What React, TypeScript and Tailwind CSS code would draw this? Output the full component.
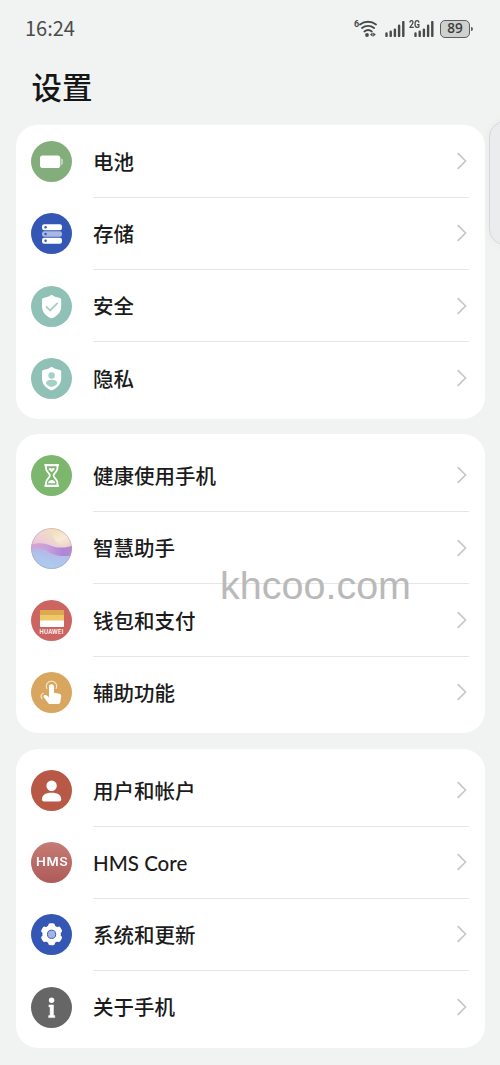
import type { ReactNode } from 'react';

type Item = { id: string; label: string; bg: string; icon: ReactNode };

const BatteryIcon = () => (
  <svg viewBox="0 0 41 41" className="size-full" aria-hidden="true">
    <rect x="9" y="14.6" width="20.3" height="12.4" rx="2.8" fill="#fff" />
    <path d="M30.2 17.8h.6a1 1 0 0 1 1 1v4a1 1 0 0 1-1 1h-.6z" fill="#fff" opacity=".6" />
  </svg>
);

const StorageIcon = () => (
  <svg viewBox="0 0 41 41" className="size-full" aria-hidden="true">
    <rect x="11" y="11.2" width="20" height="6" rx="2.2" fill="#fff" />
    <rect x="11" y="18.2" width="20" height="5.6" rx="2.2" fill="#a9b9e6" />
    <rect x="11" y="24.8" width="20" height="6" rx="2.2" fill="#fff" />
    <circle cx="14.6" cy="14.2" r="1.2" fill="#3456b5" />
    <circle cx="14.6" cy="21" r="1.2" fill="#3456b5" />
    <circle cx="14.6" cy="27.8" r="1.2" fill="#3456b5" />
  </svg>
);

const SHIELD = 'M19.4 9.400c.7-.4 1.700-.4 2.400 0 2.200 1.300 4.600 2.100 7 2.500.8.2 1.400.8 1.400 1.700v6.600c0 5.400-3.200 9.200-8.300 11.700-.8.4-1.800.4-2.600 0-5.100-2.500-8.300-6.300-8.300-11.700v-6.600c0-.9.6-1.500 1.400-1.700 2.400-.4 4.800-1.200 7-2.500z';

const SecurityIcon = () => (
  <svg viewBox="0 0 41 41" className="size-full" aria-hidden="true">
    <path d={SHIELD} fill="#fff" />
    <path d="M15 20.400l4.100 4 7.600-7.500" fill="none" stroke="#a9cfc6" strokeWidth="1.800" />
  </svg>
);

const PrivacyIcon = () => (
  <svg viewBox="0 0 41 41" className="size-full" aria-hidden="true">
    <path d={SHIELD} fill="#fff" />
    <circle cx="20.600" cy="17.500" r="3.200" fill="#a5d0c6" />
    <path d="M15 25.400c0-2.300 2-3.600 5.600-3.600s5.600 1.300 5.600 3.600c-1.200 1.700-3.200 3.200-5.600 3.500-2.400-.3-4.400-1.800-5.600-3.500z" fill="#a5d0c6" />
  </svg>
);

const HourglassIcon = () => (
  <svg viewBox="0 0 41 41" className="size-full" aria-hidden="true">
    <g fill="none" stroke="#fff" strokeWidth="1.800" strokeLinecap="round" strokeLinejoin="round">
      <path d="M14.300 10.200h12.800M14.300 30.800h12.800" strokeWidth="2.200" />
      <path d="M15 10.500v3c0 3 3.900 4.800 3.900 7s-3.900 4-3.900 7v3M26.400 10.500v3c0 3-3.900 4.800-3.900 7s3.900 4 3.900 7v3" />
    </g>
    <path d="M20.700 17.300l-2.700-2.500c-1.100-1.200.9-2.700 2.700-1.100 1.800-1.600 3.800-.1 2.700 1.100z" fill="#fff" />
    <path d="M17 28.300c.3-2 2-3.200 3.700-3.200s3.400 1.200 3.700 3.200z" fill="#fff" />
  </svg>
);

const AssistantIcon = () => (
  <svg viewBox="0 0 41 41" className="size-full" aria-hidden="true">
    <defs>
      <linearGradient id="sky" x1="0" y1="0.8" x2="0.5" y2="0">
        <stop offset="0" stopColor="#dfb0d2" />
        <stop offset="0.5" stopColor="#ebcbd8" />
        <stop offset="1" stopColor="#f2e0c4" />
      </linearGradient>
      <linearGradient id="sun" x1="0.2" y1="0" x2="0.7" y2="1">
        <stop offset="0" stopColor="#f0dcae" />
        <stop offset="0.6" stopColor="#f7ead6" />
        <stop offset="1" stopColor="#f0cfc8" />
      </linearGradient>
      <linearGradient id="wave" x1="0" y1="0" x2="1" y2="0">
        <stop offset="0" stopColor="#dca5cf" />
        <stop offset="0.4" stopColor="#c7a0dc" />
        <stop offset="0.75" stopColor="#ae86d6" />
        <stop offset="1" stopColor="#b08dd0" />
      </linearGradient>
      <linearGradient id="sea" x1="0.3" y1="1" x2="0.6" y2="0">
        <stop offset="0" stopColor="#a8d3ee" />
        <stop offset="0.6" stopColor="#b0c2ec" />
        <stop offset="1" stopColor="#bfabe3" />
      </linearGradient>
      <clipPath id="orb">
        <circle cx="20.5" cy="20.5" r="20.5" />
      </clipPath>
      <filter id="soft">
        <feGaussianBlur stdDeviation="0.7" />
      </filter>
    </defs>
    <g clipPath="url(#orb)">
      <path d="M0 0h41v41H0z" fill="url(#sky)" />
      <g filter="url(#soft)">
        <path d="M18 -2h26v20c-6 2-12 1-17-3S21 6 18 -2z" fill="url(#sun)" />
        <path d="M-2 17c8-2.500 15-2.500 21 .2s14 3.600 24 0V34H-2z" fill="url(#wave)" />
        <path d="M-2 21c9-2.500 14-1 19 2.500s15 6.500 27 3v18H-2z" fill="url(#sea)" />
      </g>
    </g>
    <circle cx="20.5" cy="20.500" r="20" fill="none" stroke="#a796a4" strokeOpacity=".5" strokeWidth=".8" />
  </svg>
);

const WalletIcon = () => (
  <div className="flex size-full flex-col items-center pt-[10.500px]">
    <svg viewBox="0 0 24 17" className="h-[17px] w-6 shrink-0" aria-hidden="true">
      <rect width="24" height="8" rx="1" fill="#dba94f" />
      <rect y="5" width="24" height="7" fill="#edc96c" />
      <rect y="10.500" width="24" height="6.500" rx=".8" fill="#fff" />
    </svg>
    <span className="mt-[2.500px] font-['Inter',sans-serif] text-[5.600px] leading-[5px] font-semibold tracking-[0.250px] text-white">HUAWEI</span>
  </div>
);

const TouchIcon = () => (
  <svg viewBox="0 0 41 41" className="size-full" aria-hidden="true">
    <path
      d="M18 14.800a2.500 2.500 0 0 1 5 0v6l5.200.9c1.500.3 2.200 1.300 2 2.700l-.9 5.700c-.2 1.300-1 2-2.200 2h-7.600c-1 0-1.800-.4-2.400-1.200l-4.300-5.700c-.6-.8-.3-1.700.6-2.100 1-.4 2-.1 2.700.6l1.900 1.600z"
      fill="#fff"
    />
    <path d="M15.800 16.500a5.200 5.200 0 1 1 9.400 0" fill="none" stroke="#f7e6ca" strokeWidth="1.200" strokeLinecap="round" />
    <path d="M12.300 21.200c-2.500 1-2.900 3.500-1.300 5.500" fill="none" stroke="#f7e6ca" strokeWidth="1.200" strokeLinecap="round" />
  </svg>
);

const UserIcon = () => (
  <svg viewBox="0 0 41 41" className="size-full" aria-hidden="true">
    <circle cx="20.600" cy="15.800" r="5.200" fill="#fff" />
    <path d="M11 29.300c0-4.200 3-6.600 9.600-6.600s9.600 2.400 9.600 6.600c0 1.500-.8 2.200-2.200 2.200H13.200c-1.400 0-2.200-.7-2.200-2.200z" fill="#fff" />
  </svg>
);

const HmsIcon = () => (
  <span className="scale-x-115 pl-px font-['Inter',sans-serif] text-[11.500px] leading-none font-semibold tracking-[0.500px] text-white">HMS</span>
);

const GearIcon = () => (
  <svg viewBox="0 0 41 41" className="size-full" aria-hidden="true">
    <circle cx="20.600" cy="20.300" r="9.200" fill="#fff" />
    <g fill="#fff">
      <rect x="17.200" y="9.300" width="6.800" height="22" rx="2.200" />
      <rect x="17.200" y="9.300" width="6.800" height="22" rx="2.200" transform="rotate(60 20.600 20.300)" />
      <rect x="17.200" y="9.300" width="6.800" height="22" rx="2.200" transform="rotate(120 20.600 20.300)" />
    </g>
    <circle cx="20.600" cy="20.300" r="4.100" fill="#a3b5e6" stroke="#3858b4" strokeWidth="1" />
  </svg>
);

const InfoIcon = () => (
  <svg viewBox="0 0 41 41" className="size-full" aria-hidden="true">
    <circle cx="20.600" cy="13.200" r="2.700" fill="#fff" />
    <path d="M17.900 17.900h4.600v10.700h1.300v2h-6.200v-2h1.500v-8.700h-1.200z" fill="#fff" stroke="#fff" strokeWidth=".5" strokeLinejoin="round" />
  </svg>
);

const groups: { id: string; className: string; items: Item[] }[] = [
  {
    id: 'device',
    className: 'h-[295px] border-t border-[#f4f5f5] pt-[0.500px]',
    items: [
      { id: 'battery', label: '电池', bg: 'bg-[#83ae7b]', icon: <BatteryIcon /> },
      { id: 'storage', label: '存储', bg: 'bg-[#3456b5]', icon: <StorageIcon /> },
      { id: 'security', label: '安全', bg: 'bg-[#8fc1b7]', icon: <SecurityIcon /> },
      { id: 'privacy', label: '隐私', bg: 'bg-[#8fc1b7]', icon: <PrivacyIcon /> },
    ],
  },
  {
    id: 'services',
    className: 'mt-[15px] h-[299px] pt-[5.800px]',
    items: [
      { id: 'wellbeing', label: '健康使用手机', bg: 'bg-[#7cb76d]', icon: <HourglassIcon /> },
      { id: 'assistant', label: '智慧助手', bg: 'bg-[#e3c9dc]', icon: <AssistantIcon /> },
      { id: 'wallet', label: '钱包和支付', bg: 'bg-[#cc6562]', icon: <WalletIcon /> },
      { id: 'accessibility', label: '辅助功能', bg: 'bg-[#d8a65f]', icon: <TouchIcon /> },
    ],
  },
  {
    id: 'system',
    className: 'mt-4 h-[299px] pt-[5.300px]',
    items: [
      { id: 'accounts', label: '用户和帐户', bg: 'bg-[#b85846]', icon: <UserIcon /> },
      { id: 'hms', label: 'HMS Core', bg: 'bg-linear-to-b from-[#c47c74] to-[#ae5b5a]', icon: <HmsIcon /> },
      { id: 'updates', label: '系统和更新', bg: 'bg-[#3456b5]', icon: <GearIcon /> },
      { id: 'about', label: '关于手机', bg: 'bg-[#666666]', icon: <InfoIcon /> },
    ],
  },
];

function SignalBars() {
  return (
    <svg viewBox="0 0 20 16" className="h-4 w-5" aria-hidden="true">
      <path d="M1.500 15v-2.600M5.700 15v-4.200M9.900 15V8.600M14.100 15V4.800M18.300 15V1" stroke="#484a49" strokeWidth="2.400" strokeLinecap="round" />
    </svg>
  );
}

function StatusBar() {
  return (
    <header className="flex h-[58px] items-center justify-between pr-[27px] pl-[25px]">
      <span className="pb-[2px] font-['Noto_Sans_CJK_SC',sans-serif] text-[20px] leading-none text-[#4a4c4b]">16:24</span>
      <div className="flex items-center">
        <svg viewBox="0 0 24 20" className="mr-[7px] h-5 w-6" aria-hidden="true">
          <text x="0" y="7.500" fontSize="9" fontWeight="700" fontFamily="Roboto, sans-serif" fill="#484a49">6</text>
          <g fill="none" stroke="#484a49" strokeWidth="1.900" strokeLinecap="round">
            <path d="M6 5.400c4.700-3.500 11.300-3.500 16 0" />
            <path d="M8 9c3.500-2.800 8.600-2.800 12.100 0" />
            <path d="M10.400 12.500c2.200-1.800 5.200-1.800 7.400 0" />
          </g>
          <circle cx="13" cy="16" r="1.900" fill="#484a49" />
          <path d="M18.600 13.500v4.200l-2.600-2.100zM19.200 13.500v4.200l2.600-2.100z" fill="#484a49" />
        </svg>
        <SignalBars />
        <div className="relative mr-[6px] ml-[9px]">
          <SignalBars />
          <span className="absolute -top-[2px] -left-[5px] origin-left scale-x-80 bg-[#f1f3f3] pr-px font-['Roboto',sans-serif] text-[11px] leading-[11px] font-bold text-[#484a49]">2G</span>
        </div>
        <div className="flex h-[18px] w-[30px] items-center justify-center rounded-[5px] border-[1.500px] border-[#5c5e5d] bg-[#cfd1d1] font-['Open_Sans',sans-serif] text-[13.500px] leading-none font-semibold text-[#3c3e3d]">
          89
        </div>
        <div className="ml-px h-1 w-[2px] rounded-r-sm bg-[#5c5e5d]" />
      </div>
    </header>
  );
}

function SettingsRow({ item, last }: { item: Item; last: boolean }) {
  return (
    <li className="flex h-[72.250px] pl-[15.500px]">
      <div className="flex items-center">
        <div className={`flex size-[41px] items-center justify-center overflow-hidden rounded-full ${item.bg}`}>{item.icon}</div>
      </div>
      <div className={`mr-4 ml-[21px] flex flex-1 items-center justify-between border-b ${last ? 'border-transparent' : 'border-[#e5e6e6]'}`}>
        <span className="pt-[2px] font-['Lato','Noto_Sans_CJK_SC',sans-serif] text-[20.500px] leading-none font-medium whitespace-nowrap text-[#1b1b1b]">{item.label}</span>
        <svg viewBox="0 0 10 18" className="mr-[2px] h-[18px] w-[10px]" fill="none" aria-hidden="true">
          <path d="M1.200 1.600L8.600 9l-7.400 7.400" stroke="#c6c6c6" strokeWidth="1.700" strokeLinecap="round" strokeLinejoin="round" />
        </svg>
      </div>
    </li>
  );
}

export default function App() {
  return (
    <div className="relative h-[1065px] w-[500px] overflow-hidden bg-[#f1f3f3]">
      <StatusBar />
      <h1 className="flex h-[66px] items-center pb-[10px] pl-[31.500px] font-['Noto_Sans_CJK_SC',sans-serif] text-[30.500px] leading-none font-medium text-[#161616]">设置</h1>

      <main className="pr-[15px] pl-[15.500px]">
        {groups.map(group => (
          <ul key={group.id} className={`rounded-[22px] bg-white ${group.className}`}>
            {group.items.map((item, i) => (
              <SettingsRow key={item.id} item={item} last={i === group.items.length - 1} />
            ))}
          </ul>
        ))}
      </main>

      {/* Edge panel handle */}
      <div className="absolute top-[121px] left-[489px] h-[124px] w-10 rounded-[16px] border border-[#d6d8d9] bg-[#ebecee] shadow-[0_0_10px_rgba(0,0,0,0.04)]" />

      {/* Watermark */}
      <div className="pointer-events-none absolute top-[562px] left-[220px] font-['Liberation_Sans',sans-serif] text-[39.500px] leading-[46px] text-[#b9b9b9]">khcoo.com</div>
    </div>
  );
}
